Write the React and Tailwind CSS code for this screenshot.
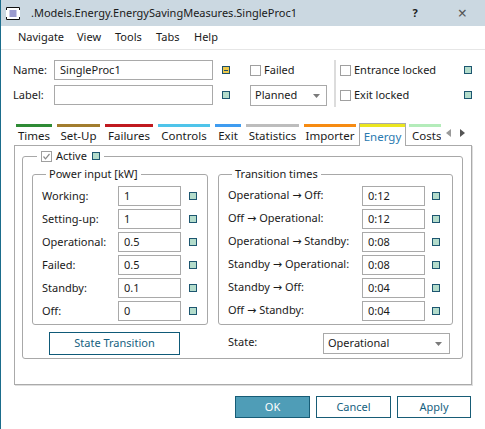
import React from 'react';

const tabs = [
    { name: 'Times', w: 'w-[36px]', bar: 'bg-[#2e8b35]' },
    { name: 'Set-Up', w: 'w-[43px]', bar: 'bg-[#a27d2e]' },
    { name: 'Failures', w: 'w-[48px]', bar: 'bg-[#c0191f]' },
    { name: 'Controls', w: 'w-[52px]', bar: 'bg-[#4fc4ea]' },
    { name: 'Exit', w: 'w-[26px]', bar: 'bg-[#3f9cf0]' },
    { name: 'Statistics', w: 'w-[53px]', bar: 'bg-[#bdbdbd]' },
    { name: 'Importer', w: 'w-[52px]', bar: 'bg-[#f68b12]' },
    { name: 'Energy', w: 'w-[47px]', bar: 'bg-[#ebe61f]', active: true },
    { name: 'Costs', w: 'w-[32px]', bar: 'bg-[#b4ecba]' },
];

const power = [
    ['Working:', '1'],
    ['Setting-up:', '1'],
    ['Operational:', '0.5'],
    ['Failed:', '0.5'],
    ['Standby:', '0.1'],
    ['Off:', '0'],
];

const transitions = [
    ['Operational', 'Off:', '0:12'],
    ['Off', 'Operational:', '0:12'],
    ['Operational', 'Standby:', '0:08'],
    ['Standby', 'Operational:', '0:08'],
    ['Standby', 'Off:', '0:04'],
    ['Off', 'Standby:', '0:04'],
];

function Sq() {
    return <span className="inline-block w-[8px] h-[8px] shrink-0 border border-[#1d5670] bg-[#b3dccb]" />;
}

function Check({ checked }) {
    return (
        <span className="inline-flex items-center justify-center w-[11px] h-[11px] shrink-0 border border-[#a0a0a0] bg-white">
            {checked && (
                <svg width="9" height="9" viewBox="0 0 9 9">
                    <polyline points="1.5,4.5 3.5,6.8 7.5,2" fill="none" stroke="#8a8a8a" strokeWidth="1.2" />
                </svg>
            )}
        </span>
    );
}

function Caret() {
    return (
        <svg width="7" height="4" viewBox="0 0 7 4" className="shrink-0">
            <polygon points="0,0 7,0 3.5,4" fill="#7a7a7a" />
        </svg>
    );
}

export default function App() {
    return (
        <div className="w-[485px] h-[429px] bg-white border-l border-[#1b6d8c] flex flex-col text-[11px] text-[#1a1a1a] font-['Noto_Sans','Open_Sans',sans-serif] overflow-hidden">
            {/* title bar */}
            <div className="h-[26px] shrink-0 bg-[#cbd8e1] flex items-center">
                <svg width="14" height="13" viewBox="0 0 14 13" className="ml-[5px] shrink-0">
                    <rect x="0" y="0" width="14" height="13" fill="#fff" />
                    <path d="M0.5 3V0.5H13.5V3M0.5 10V12.5H13.5V10" fill="none" stroke="#111" strokeWidth="1" />
                    <rect x="3.5" y="3" width="7" height="7" fill="#9c9ccf" />
                </svg>
                <span className="ml-[11px]">.Models.Energy.EnergySavingMeasures.SingleProc1</span>
                <span className="ml-auto font-bold">?</span>
                <span className="ml-[40px] mr-[18px] text-[16px] text-[#555] leading-none">×</span>
            </div>

            {/* menu */}
            <div className="h-[24px] shrink-0 border-b border-[#e6e6e6] flex items-center pl-[17px]">
                <span className="w-[59px]">Navigate</span>
                <span className="w-[38px]">View</span>
                <span className="w-[41px]">Tools</span>
                <span className="w-[38px]">Tabs</span>
                <span>Help</span>
            </div>

            {/* header fields */}
            <div className="flex pl-[12px] pt-[10px] shrink-0">
                <div className="flex flex-col gap-[5px]">
                    <div className="flex items-center h-[20px]">
                        <span className="w-[41px]">Name:</span>
                        <div className="w-[159px] h-[20px] border border-[#a9a9a9] flex items-center pl-[5px]">SingleProc1</div>
                        <span className="ml-[9px] w-[8px] h-[8px] border border-[#1d4f68] bg-[#ecc94b] flex items-center justify-center">
                            <span className="w-[4px] h-[1px] bg-[#1d4f68]" />
                        </span>
                    </div>
                    <div className="flex items-center h-[20px]">
                        <span className="w-[41px]">Label:</span>
                        <div className="w-[159px] h-[20px] border border-[#a9a9a9]" />
                        <span className="ml-[9px]"><Sq /></span>
                    </div>
                </div>
                <div className="ml-[20px] w-[77px] flex flex-col gap-[5px]">
                    <div className="flex items-center h-[20px] gap-[3px]">
                        <Check />
                        <span>Failed</span>
                    </div>
                    <div className="h-[21px] border border-[#a9a9a9] flex items-center pl-[4px] pr-[6px]">
                        <span>Planned</span>
                        <span className="ml-auto"><Caret /></span>
                    </div>
                </div>
                <div className="ml-[7px] w-[2px] h-[47px] bg-[#dcdcdc]" />
                <div className="ml-[4px] w-[132px] flex flex-col gap-[5px]">
                    <div className="flex items-center h-[20px] gap-[3px]">
                        <Check />
                        <span>Entrance locked</span>
                        <span className="ml-auto"><Sq /></span>
                    </div>
                    <div className="flex items-center h-[21px] gap-[3px]">
                        <Check />
                        <span>Exit locked</span>
                        <span className="ml-auto"><Sq /></span>
                    </div>
                </div>
            </div>

            {/* tabs */}
            <div className="mt-[16px] ml-[15px] h-[22px] flex items-start gap-[5px] shrink-0">
                {tabs.map((t) =>
                    t.active ? (
                        <div key={t.name} className={`${t.w} -mx-[2px] h-[23px] relative z-10 bg-white border-x border-t border-[#aaaaaa] flex flex-col`}>
                            <div className={`h-[3px] ${t.bar}`} />
                            <div className="flex-1 flex items-center justify-center text-[#2a7ab0] text-[11.5px]">{t.name}</div>
                        </div>
                    ) : (
                        <div key={t.name} className={`${t.w} pt-[1px] flex flex-col overflow-hidden`}>
                            <div className={`h-[3px] ${t.bar}`} />
                            <div className={`h-[17px] flex items-center whitespace-nowrap text-[11.5px] ${t.name === 'Costs' ? 'justify-start pl-[3px]' : 'justify-center'}`}>{t.name}</div>
                        </div>
                    )
                )}
                <div className="flex items-center gap-[9px] h-[22px] pb-[2px]">
                    <svg width="5" height="8" viewBox="0 0 5 8"><polygon points="5,0 5,8 0,4" fill="#9a9a9a" /></svg>
                    <svg width="5" height="8" viewBox="0 0 5 8"><polygon points="0,0 0,8 5,4" fill="#555" /></svg>
                </div>
            </div>

            {/* tab panel */}
            <div className="ml-[13px] w-[458px] h-[240px] shrink-0 border border-[#aaaaaa] shadow-[1px_1px_0_#dedede]">
                <fieldset className="ml-[7px] mt-[2px] w-[441px] border border-[#a8a8a8] rounded-[3px] px-[9px] pb-[3px]">
                    <legend className="ml-[5px] px-[4px]">
                        <span className="flex items-center h-[16px]">
                            <Check checked />
                            <span className="ml-[4px]">Active</span>
                            <span className="ml-[5px]"><Sq /></span>
                        </span>
                    </legend>
                    <div className="mt-[2px] flex gap-[10px]">
                        <fieldset className="w-[176px] border border-[#a8a8a8] rounded-[3px] pl-[9px] pt-[4px] pb-[3px]">
                            <legend className="ml-[4px] px-[3px] h-[16px] leading-[16px]">Power input [kW]</legend>
                            <div className="flex flex-col gap-[3px]">
                                {power.map(([l, v]) => (
                                    <div key={l} className="flex items-center h-[20px]">
                                        <span className="w-[76px]">{l}</span>
                                        <div className="w-[63px] h-[20px] border border-[#a9a9a9] flex items-center pl-[5px]">{v}</div>
                                        <span className="ml-[8px]"><Sq /></span>
                                    </div>
                                ))}
                            </div>
                        </fieldset>
                        <fieldset className="w-[235px] border border-[#a8a8a8] rounded-[3px] pl-[9px] pt-[4px] pb-[3px]">
                            <legend className="ml-[4px] px-[3px] h-[16px] leading-[16px]">Transition times</legend>
                            <div className="flex flex-col gap-[3px]">
                                {transitions.map(([a, b, v]) => (
                                    <div key={a + b} className="flex items-center h-[20px]">
                                        <span className="w-[134px] whitespace-nowrap">
                                            {a} <span className="font-['DejaVu_Sans',sans-serif] text-[11px]">→</span> {b}
                                        </span>
                                        <div className="w-[63px] h-[20px] border border-[#a9a9a9] flex items-center pl-[5px]">{v}</div>
                                        <span className="ml-[7px]"><Sq /></span>
                                    </div>
                                ))}
                            </div>
                        </fieldset>
                    </div>
                    <div className="mt-[7px] flex gap-[10px]">
                        <div className="w-[176px]">
                            <button className="ml-[17px] w-[131px] h-[23px] border border-[#0f5a78] bg-white text-[#155f80] flex items-center justify-center">State Transition</button>
                        </div>
                        <div className="flex items-center">
                            <span className="w-[105px] pl-[10px] pb-[3px]">State:</span>
                            <div className="w-[127px] h-[21px] border border-[#a9a9a9] flex items-center pl-[4px] pr-[7px]">
                                <span>Operational</span>
                                <span className="ml-auto"><Caret /></span>
                            </div>
                        </div>
                    </div>
                </fieldset>
            </div>

            {/* dialog buttons */}
            <div className="mt-[11px] flex justify-end gap-[6px] pr-[14px]">
                <button className="w-[75px] h-[22px] border border-[#175c76] bg-[#4f9db7] text-white flex items-center justify-center">OK</button>
                <button className="w-[75px] h-[22px] border border-[#175c76] bg-white text-[#155f80] flex items-center justify-center">Cancel</button>
                <button className="w-[74px] h-[22px] border border-[#175c76] bg-white text-[#155f80] flex items-center justify-center">Apply</button>
            </div>
        </div>
    );
}
